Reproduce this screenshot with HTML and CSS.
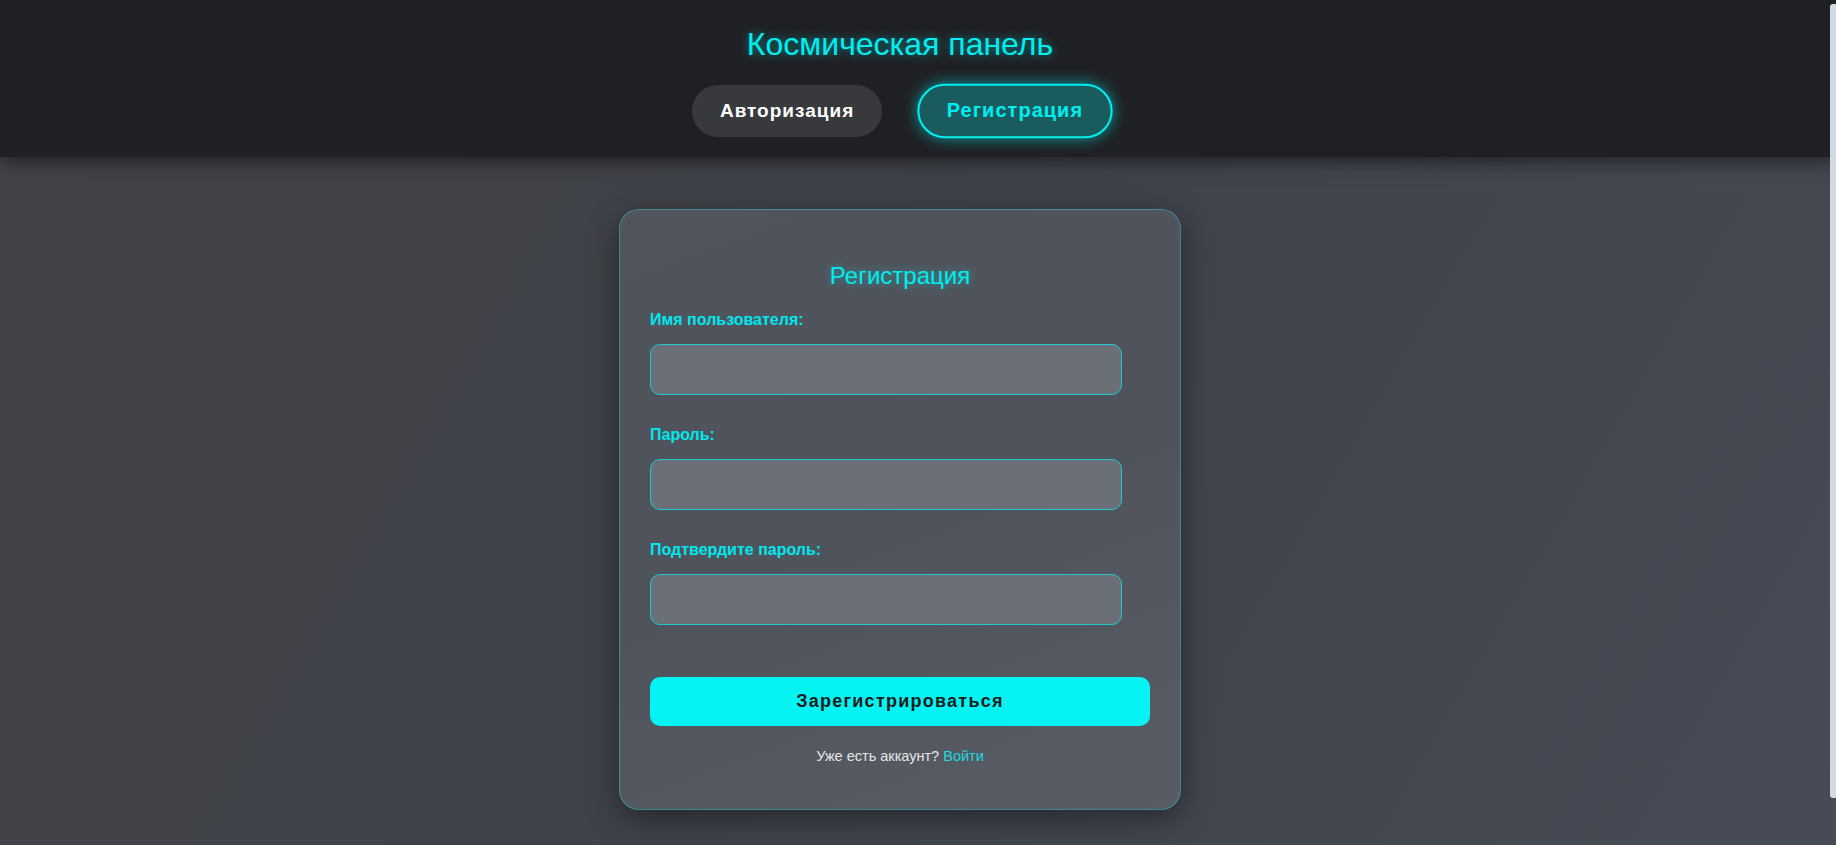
FILE: index.html
```html
<!DOCTYPE html>
<html lang="ru">
<head>
<meta charset="utf-8">
<title>Космическая панель</title>
<link rel="stylesheet" href="styles.css">
</head>
<body>
<header class="topbar">
  <div class="topbar-inner">
    <h1 class="brand">Космическая панель</h1>
    <nav class="tabs">
      <button class="tab" type="button">Авторизация</button>
      <button class="tab tab-active" type="button">Регистрация</button>
    </nav>
  </div>
</header>
<main class="stage">
  <form class="card">
    <h2 class="card-title">Регистрация</h2>
    <div class="field">
      <label class="field-label" for="u">Имя пользователя:</label>
      <input class="field-input" id="u" type="text">
    </div>
    <div class="field">
      <label class="field-label" for="p">Пароль:</label>
      <input class="field-input" id="p" type="password">
    </div>
    <div class="field">
      <label class="field-label" for="c">Подтвердите пароль:</label>
      <input class="field-input" id="c" type="password">
    </div>
    <button class="submit" type="button">Зарегистрироваться</button>
    <p class="switch">Уже есть аккаунт? <a class="switch-link" href="#">Войти</a></p>
  </form>
</main>
<div class="scroll-track" aria-hidden="true"><div class="scroll-thumb"></div></div>
</body>
</html>
```
FILE: styles.css
```css
html {
  background: #40434a;
}
body {
  margin: 0;
  font-family: "Liberation Sans", Arial, sans-serif;
  background: linear-gradient(120deg, #424346 0%, #3f424a 45%, #464b55 100%);
}
.scroll-track {
  position: fixed;
  top: 0;
  right: 0;
  bottom: 0;
  width: 10px;
  display: flex;
  justify-content: flex-end;
  padding-top: 4px;
  box-sizing: border-box;
  z-index: 5;
}
.scroll-thumb {
  width: 6px;
  height: 794px;
  background: #d2dbe4;
  border-radius: 3px 0 0 3px;
}
.topbar {
  background: #1f2024;
  box-shadow: 0 4px 18px rgba(0, 0, 0, 0.55);
  position: relative;
  z-index: 1;
}
.topbar-inner {
  display: flex;
  flex-direction: column;
  align-items: center;
  padding: 26px 36px 20px 0;
}
.brand {
  margin: 0;
  font-size: 32px;
  line-height: 37px;
  font-weight: 400;
  color: #00eef0;
  text-shadow: 0 0 10px rgba(0, 238, 240, 0.55);
}
.tabs {
  display: flex;
  align-items: center;
  gap: 40px;
  margin-top: 22px;
}
.tab {
  font-family: "Liberation Sans", Arial, sans-serif;
  font-size: 19px;
  font-weight: 700;
  line-height: 22px;
  letter-spacing: 1px;
  color: #ffffff;
  background: #38393d;
  border: 2px solid transparent;
  border-radius: 30px;
  padding: 13px 26px;
}
.tab-active {
  color: #00eef0;
  background: #1a5c5e;
  border-color: #00eef0;
  transform: scale(1.05);
  box-shadow: 0 0 14px rgba(0, 238, 240, 0.6);
}
.stage {
  display: flex;
  justify-content: center;
  padding: 52px 36px 89px 0;
}
.card {
  width: 500px;
  padding: 30px;
  border: 1px solid rgba(40, 200, 210, 0.45);
  border-radius: 20px;
  background: linear-gradient(160deg, #50545c 0%, #4f545c 50%, #575c65 100%);
  box-shadow: 0 8px 32px rgba(0, 0, 0, 0.45);
}
.card-title {
  margin: 22px 0 21px;
  font-size: 24px;
  line-height: 28px;
  font-weight: 400;
  text-align: center;
  color: #00eef0;
  text-shadow: 0 0 8px rgba(0, 238, 240, 0.45);
}
.field {
  margin-bottom: 31px;
}
.field-label {
  display: block;
  margin-bottom: 15px;
  font-size: 16px;
  line-height: 18px;
  font-weight: 700;
  color: #00e8ee;
}
.field-input {
  display: block;
  box-sizing: border-box;
  width: 472px;
  height: 51px;
  padding: 15px;
  font-size: 16px;
  color: #fff;
  background: #6b6f77;
  border: 1px solid #1ec8ce;
  border-radius: 10px;
  outline: none;
}
.submit {
  display: block;
  width: 100%;
  margin-top: 52px;
  padding: 14px 0;
  font-family: "Liberation Sans", Arial, sans-serif;
  font-size: 18px;
  line-height: 21px;
  font-weight: 700;
  letter-spacing: 1.25px;
  color: #1b1b1b;
  background: #05f3f3;
  border: none;
  border-radius: 10px;
}
.switch {
  margin: 22px 0 15px;
  font-size: 14.5px;
  line-height: 16px;
  text-align: center;
  color: #e6e6e6;
}
.switch-link {
  color: #1fd8e0;
  text-decoration: none;
}
```
